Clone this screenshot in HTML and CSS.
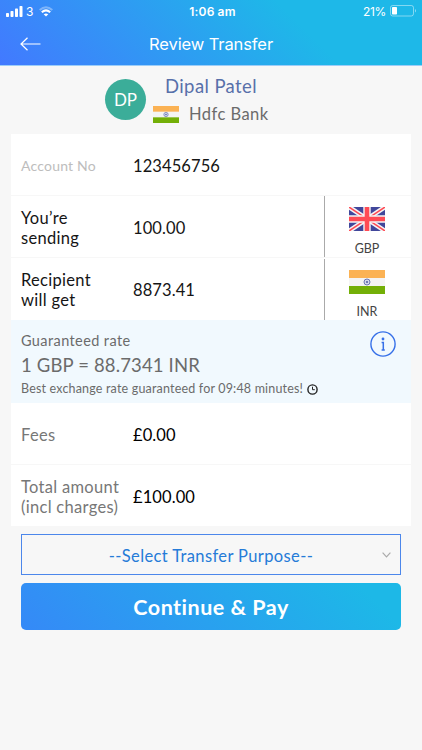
FILE: index.html
```html
<!DOCTYPE html>
<html lang="en">
<head>
<meta charset="utf-8">
<meta name="viewport" content="width=device-width, initial-scale=1">
<title>Review Transfer</title>
<link rel="stylesheet" href="styles.css">
</head>
<body>
<svg width="0" height="0" class="defs" aria-hidden="true">
  <symbol id="india" viewBox="0 0 36 24" preserveAspectRatio="none">
    <rect width="36" height="24" fill="#f4f4f4"/>
    <rect width="36" height="8" fill="#fbb254"/>
    <rect y="16" width="36" height="8" fill="#73af07"/>
    <circle cx="18" cy="12" r="3" fill="#d5d8ec" stroke="#6c77b4" stroke-width="1"/>
    <circle cx="18" cy="12" r="1.1" fill="#5864a8"/>
  </symbol>
  <symbol id="uk" viewBox="0 0 36 24" preserveAspectRatio="none">
    <rect width="36" height="24" fill="#41479b"/>
    <path d="M0 0L36 24M36 0L0 24" stroke="#f5f5f5" stroke-width="4.6"/>
    <path d="M0 0L14 9.3M36 0L22 9.3M0 24L14 14.7M36 24L22 14.7" stroke="#ff4b55" stroke-width="1.5"/>
    <path d="M18 0V24M0 12H36" stroke="#f5f5f5" stroke-width="7.4"/>
    <path d="M18 0V24M0 12H36" stroke="#ff4b55" stroke-width="4.6"/>
  </symbol>
</svg>
<header class="top">
  <div class="status">
    <div class="signal">
      <svg width="17" height="11" viewBox="0 0 17 11" fill="#fff"><rect x="0" y="7" width="3" height="4" rx=".8"/><rect x="4.5" y="5" width="3" height="6" rx=".8"/><rect x="9" y="2.5" width="3" height="8.5" rx=".8"/><rect x="13.5" y="0" width="3" height="11" rx=".8"/></svg>
      <span class="carrier">3</span>
      <svg width="14" height="11" viewBox="0 0 14 11" fill="none" stroke="#fff" stroke-width="2"><path d="M.7 4.1Q7 -1.7 13.3 4.1" opacity=".35"/><path d="M2.8 6.3Q7 2.4 11.2 6.3"/><path d="M7 10.6L4.7 8.3Q7 6.5 9.3 8.3Z" fill="#fff" stroke="none"/></svg>
    </div>
    <div class="time">1:06 am</div>
    <div class="power">
      <span>21%</span>
      <svg width="27" height="12" viewBox="0 0 27 12"><rect x=".5" y=".5" width="23" height="10.5" rx="2.2" fill="none" stroke="#fff" stroke-opacity=".45"/><rect x="2" y="2" width="5" height="7.5" rx=".7" fill="#fff"/><path d="M25 4Q27 5.7 25 7.6Z" fill="#fff" opacity=".5"/></svg>
    </div>
  </div>
  <div class="nav">
    <svg class="back" width="21" height="14" viewBox="0 0 21 14" fill="none" stroke="#fff" stroke-width="1.2"><path d="M7.5 .8L1 7L7.5 13.2M1 7H20.5"/></svg>
    <h1>Review Transfer</h1>
  </div>
</header>
<main>
  <section class="person">
    <div class="avatar">DP</div>
    <div class="who">
      <div class="name">Dipal Patel</div>
      <div class="bank"><svg width="26" height="17"><use href="#india"/></svg><span>Hdfc Bank</span></div>
    </div>
  </section>
  <section class="details">
    <div class="row"><div class="label muted">Account No</div><div class="value account">123456756</div></div>
    <div class="row"><div class="label dark">You’re<br>sending</div><div class="value">100.00</div><div class="currency"><svg width="36" height="24"><use href="#uk"/></svg><span>GBP</span></div></div>
    <div class="row last"><div class="label dark">Recipient<br>will get</div><div class="value">8873.41</div><div class="currency"><svg width="36" height="24"><use href="#india"/></svg><span>INR</span></div></div>
    <div class="rate">
      <div>
        <div class="rate-title">Guaranteed rate</div>
        <div class="rate-value">1 GBP = 88.7341 INR</div>
        <div class="rate-note"><span>Best exchange rate guaranteed for 09:48 minutes!</span><svg width="11" height="11" viewBox="0 0 11 11" fill="none" stroke="#222"><circle cx="5.5" cy="5.5" r="4.6" stroke-width="1.4"/><path d="M5.5 2.7V5.7H7.8" stroke-width="1"/></svg></div>
      </div>
      <svg class="info" width="26" height="26" viewBox="0 0 26 26" fill="none" stroke="#3670e8"><circle cx="13" cy="13" r="12.1" stroke-width="1.4"/><circle cx="13" cy="8" r="1.4" fill="#3670e8" stroke="none"/><path d="M11.6 11.6H13.3V18.8M11.6 18.9H14.8" stroke-width="1.5"/></svg>
    </div>
    <div class="row"><div class="label">Fees</div><div class="value money">£0.00</div></div>
    <div class="row last total"><div class="label">Total amount<br>(incl charges)</div><div class="value money">£100.00</div></div>
  </section>
  <section class="actions">
    <div class="select" role="combobox" tabindex="0"><span>--Select Transfer Purpose--</span><svg class="chevron" width="9" height="6" viewBox="0 0 9 6" fill="none" stroke="#aaa" stroke-width="1.2"><path d="M.6 .7L4.5 4.8L8.4 .7"/></svg></div>
    <button class="pay">Continue &amp; Pay</button>
  </section>
</main>
</body>
</html>
```
FILE: styles.css
```css
* { box-sizing: border-box; }
body { margin: 0; min-height: 750px; background: #f7f7f7; font-family: Lato, sans-serif; color: #6b6b6b; }
svg { display: block; flex: none; }
.defs { position: absolute; }
.top { height: 66px; background: linear-gradient(45deg, #4279ff 0%, #1eb8e8 70%); border-bottom: 1px solid #9ccdf8; color: #fff; font-family: Inter, sans-serif; }
.status { height: 22px; display: grid; grid-template-columns: 1fr auto 1fr; align-items: center; padding: 0 5px 0 6px; font-size: 12px; }
.signal, .power { display: flex; align-items: center; }
.carrier { margin: 0 6px 0 3px; }
.time { font-weight: 600; margin-left: 2px; letter-spacing: .15px; }
.power { justify-content: flex-end; gap: 4px; letter-spacing: -.3px; }
.nav { height: 43px; display: grid; grid-template-columns: 60px 1fr 60px; align-items: center; }
.back { margin-left: 20px; }
.nav h1 { margin: 0; font-size: 16.5px; font-weight: 400; text-align: center; letter-spacing: -.1px; }
.person { height: 68px; display: flex; padding: 10px 0 0 105px; gap: 7px; }
.avatar { width: 41px; height: 41px; margin-top: 3px; border-radius: 50%; background: #3bad99; color: #fff; font-size: 17px; line-height: 42px; text-align: center; }
.name { margin-left: 12px; font-size: 18.5px; line-height: 20px; color: #5870aa; letter-spacing: .4px; }
.bank { display: flex; align-items: center; gap: 10px; height: 36px; font-size: 16.5px; letter-spacing: .45px; }
.details { margin: 0 11px; background: #fff; }
.row { display: flex; align-items: center; height: 62px; padding-left: 10px; border-bottom: 1px solid #f7f7f7; }
.row.last { border-bottom: 0; }
.row.total { height: 61px; }
.label, .value { padding-top: 2px; }
.label { width: 112px; font-size: 16.5px; line-height: 20px; letter-spacing: .3px; white-space: nowrap; color: #777; }
.label.muted { font-size: 14px; letter-spacing: .2px; color: #bdbdbd; }
.label.dark, .value { color: #151515; }
.value { font-size: 16.5px; letter-spacing: .1px; }
.money { color: #000; }
.currency { width: 87px; height: 61px; margin-left: auto; border-left: 1px solid #aaa; display: flex; flex-direction: column; align-items: center; padding: 11px 2px 0 0; font-size: 12.5px; line-height: 15px; gap: 10px; color: #444; }
.rate { height: 83px; background: #f1f9fe; display: flex; justify-content: space-between; padding: 11px 15px 0 10px; color: #6b6b6b; }
.rate-title { padding-top: 1px; font-size: 14.5px; line-height: 18px; letter-spacing: .4px; }
.rate-value { font-size: 18.5px; line-height: 31px; letter-spacing: .15px; }
.rate-note { display: flex; align-items: center; gap: 4px; font-size: 12.5px; line-height: 16px; letter-spacing: .18px; }
.actions { padding: 8px 21px 0; }
.select { display: grid; grid-template-columns: 20px 1fr 20px; align-items: center; height: 41px; border: 1px solid #4c87eb; color: #257bd8; font-size: 16.5px; text-align: center; letter-spacing: .38px; }
.select span { grid-column: 2; padding-top: 2px; }
.chevron { margin-left: 2px; }
.pay { display: block; width: 100%; height: 47px; margin-top: 8px; padding: 0; border: 0; border-radius: 5px; background: linear-gradient(45deg, #3589f7 0%, #1db8e7 90%); color: #fff; font: 700 21.5px Lato, sans-serif; letter-spacing: .5px; }
```
